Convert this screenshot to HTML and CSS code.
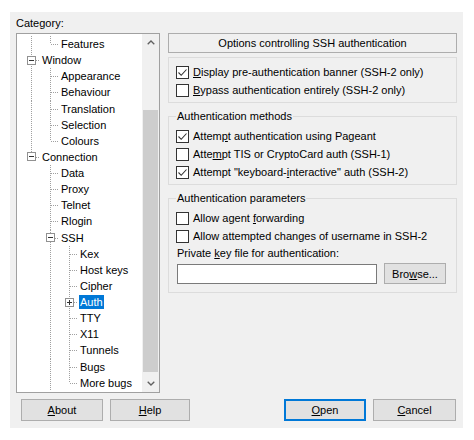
FILE: index.html
```html
<!DOCTYPE html>
<html lang="en">

<head>
    <meta charset="UTF-8">
    <meta name="viewport" content="width=device-width, initial-scale=1.0">
    <title>PuTTY Configuration</title>
    <link rel="stylesheet" href="styles.css">
</head>

<body>
    <div class="dialog">
        <div class="main">
            <div class="category">
                <div class="label">Category:</div>
                <div class="tree">
                    <ul class="nodes">
                        <li><span class="cell v"></span><span class="cell l"></span><span class="text">Features</span></li>
                        <li><span class="cell t"><svg class="exp" width="9" height="9" viewBox="0 0 9 9"><rect x="0.5" y="0.5" width="8" height="8" fill="#fff" stroke="#919191"/><path d="M2 4.5h5" stroke="#333"/></svg></span><span class="text">Window</span></li>
                        <li><span class="cell v"></span><span class="cell t"></span><span class="text">Appearance</span></li>
                        <li><span class="cell v"></span><span class="cell t"></span><span class="text">Behaviour</span></li>
                        <li><span class="cell v"></span><span class="cell t"></span><span class="text">Translation</span></li>
                        <li><span class="cell v"></span><span class="cell t"></span><span class="text">Selection</span></li>
                        <li><span class="cell v"></span><span class="cell l"></span><span class="text">Colours</span></li>
                        <li><span class="cell l"><svg class="exp" width="9" height="9" viewBox="0 0 9 9"><rect x="0.5" y="0.5" width="8" height="8" fill="#fff" stroke="#919191"/><path d="M2 4.5h5" stroke="#333"/></svg></span><span class="text">Connection</span></li>
                        <li><span class="cell"></span><span class="cell t"></span><span class="text">Data</span></li>
                        <li><span class="cell"></span><span class="cell t"></span><span class="text">Proxy</span></li>
                        <li><span class="cell"></span><span class="cell t"></span><span class="text">Telnet</span></li>
                        <li><span class="cell"></span><span class="cell t"></span><span class="text">Rlogin</span></li>
                        <li><span class="cell"></span><span class="cell t"><svg class="exp" width="9" height="9" viewBox="0 0 9 9"><rect x="0.5" y="0.5" width="8" height="8" fill="#fff" stroke="#919191"/><path d="M2 4.5h5" stroke="#333"/></svg></span><span class="text">SSH</span></li>
                        <li><span class="cell"></span><span class="cell v"></span><span class="cell t"></span><span class="text">Kex</span></li>
                        <li><span class="cell"></span><span class="cell v"></span><span class="cell t"></span><span class="text">Host keys</span></li>
                        <li><span class="cell"></span><span class="cell v"></span><span class="cell t"></span><span class="text">Cipher</span></li>
                        <li><span class="cell"></span><span class="cell v"></span><span class="cell t"><svg class="exp" width="9" height="9" viewBox="0 0 9 9"><rect x="0.5" y="0.5" width="8" height="8" fill="#fff" stroke="#919191"/><path d="M2 4.5h5M4.5 2v5" stroke="#333"/></svg></span><span class="text selected">Auth</span></li>
                        <li><span class="cell"></span><span class="cell v"></span><span class="cell t"></span><span class="text">TTY</span></li>
                        <li><span class="cell"></span><span class="cell v"></span><span class="cell t"></span><span class="text">X11</span></li>
                        <li><span class="cell"></span><span class="cell v"></span><span class="cell t"></span><span class="text">Tunnels</span></li>
                        <li><span class="cell"></span><span class="cell v"></span><span class="cell t"></span><span class="text">Bugs</span></li>
                        <li><span class="cell"></span><span class="cell v"></span><span class="cell l"></span><span class="text">More bugs</span></li>
                    </ul>
                    <div class="scrollbar">
                        <div class="arrow"><svg width="8" height="5" viewBox="0 0 8 5"><polyline points="0.7,4.3 4,1 7.3,4.3" fill="none" stroke="#606060" stroke-width="1.3"/></svg></div>
                        <div class="track"><div class="thumb"></div></div>
                        <div class="arrow"><svg width="8" height="5" viewBox="0 0 8 5"><polyline points="0.7,0.7 4,4 7.3,0.7" fill="none" stroke="#606060" stroke-width="1.3"/></svg></div>
                    </div>
                </div>
            </div>

            <div class="panel">
                <div class="header">Options controlling SSH authentication</div>

                <fieldset class="group">
                    <div class="check"><span class="box on"><svg width="11" height="11" viewBox="0 0 11 11"><polyline points="1.5,5.5 4.2,8.3 9.5,2.5" fill="none" stroke="#333" stroke-width="1.1"/></svg></span><span><u>D</u>isplay pre-authentication banner (SSH-2 only)</span></div>
                    <div class="check"><span class="box"></span><span><u>B</u>ypass authentication entirely (SSH-2 only)</span></div>
                </fieldset>

                <fieldset class="group">
                    <legend>Authentication methods</legend>
                    <div class="check"><span class="box on"><svg width="11" height="11" viewBox="0 0 11 11"><polyline points="1.5,5.5 4.2,8.3 9.5,2.5" fill="none" stroke="#333" stroke-width="1.1"/></svg></span><span>Attem<u>p</u>t authentication using Pageant</span></div>
                    <div class="check"><span class="box"></span><span>Atte<u>m</u>pt TIS or CryptoCard auth (SSH-1)</span></div>
                    <div class="check"><span class="box on"><svg width="11" height="11" viewBox="0 0 11 11"><polyline points="1.5,5.5 4.2,8.3 9.5,2.5" fill="none" stroke="#333" stroke-width="1.1"/></svg></span><span>Attempt "keyboard-<u>i</u>nteractive" auth (SSH-2)</span></div>
                </fieldset>

                <fieldset class="group">
                    <legend>Authentication parameters</legend>
                    <div class="check"><span class="box"></span><span>Allow agent <u>f</u>orwarding</span></div>
                    <div class="check"><span class="box"></span><span>Allow attempted changes of username in SSH-2</span></div>
                    <div class="field-label">Private <u>k</u>ey file for authentication:</div>
                    <div class="file-row">
                        <div class="input"></div>
                        <div class="btn browse">Bro<u>w</u>se...</div>
                    </div>
                </fieldset>
            </div>
        </div>

        <div class="buttons">
            <div class="btn"><u>A</u>bout</div>
            <div class="btn help"><u>H</u>elp</div>
            <div class="btn open"><u>O</u>pen</div>
            <div class="btn cancel"><u>C</u>ancel</div>
        </div>
    </div>
</body>

</html>
```

FILE: styles.css
```css
* {
    margin: 0;
    padding: 0;
    box-sizing: border-box;
}

ul {
    list-style: none;
}

body {
    background: #fff;
    font-family: "Liberation Sans", Arial, sans-serif;
    font-size: 11px;
    color: #000;
}

.dialog {
    width: 453px;
    height: 416px;
    margin: 12px 0 0 10px;
    padding: 3px 6px 0 6px;
    background-color: #f0f0f0;
}

.main {
    display: grid;
    grid-template-columns: 144px 289px;
    column-gap: 8px;
}

/* category tree */
.label {
    height: 16px;
    line-height: 16px;
    margin-bottom: 2px;
}

.tree {
    display: flex;
    height: 360px;
    border: 1px solid #a0a0a0;
    background-color: #fff;
}

.nodes {
    flex: 1;
    padding: 2px 0 0 5px;
}

.nodes li {
    display: flex;
    align-items: center;
    height: 16.14px;
    white-space: nowrap;
}

.cell {
    flex: none;
    display: flex;
    align-items: center;
    width: 19px;
    height: 100%;
}

.v {
    background: repeating-linear-gradient(#a0a0a0 0 1px, transparent 1px 2px) 9px 0 / 1px 100% no-repeat;
}

.t {
    background:
        repeating-linear-gradient(to right, #a0a0a0 0 1px, transparent 1px 2px) 10px 8px / 8px 1px no-repeat,
        repeating-linear-gradient(#a0a0a0 0 1px, transparent 1px 2px) 9px 0 / 1px 100% no-repeat;
}

.l {
    background:
        repeating-linear-gradient(to right, #a0a0a0 0 1px, transparent 1px 2px) 10px 8px / 8px 1px no-repeat,
        repeating-linear-gradient(#a0a0a0 0 1px, transparent 1px 2px) 9px 0 / 1px 8px no-repeat;
}

.exp {
    margin-left: 5px;
}

.text {
    padding: 0 1px;
    line-height: 14px;
}

.text.selected {
    background-color: #0078d7;
    color: #fff;
}

.scrollbar {
    display: flex;
    flex-direction: column;
    width: 17px;
    background-color: #f0f0f0;
}

.arrow {
    display: flex;
    align-items: center;
    justify-content: center;
    height: 17px;
}

.track {
    flex: 1;
    padding: 59px 1px 0;
}

.thumb {
    height: 262px;
    background-color: #cdcdcd;
}

/* options panel */
.panel {
    margin-top: 18px;
}

.header {
    height: 20px;
    line-height: 18px;
    border: 1px solid #adadad;
    text-align: center;
}

.group {
    margin-top: 4px;
    padding: 5px 7px 3px;
    border: 1px solid #dcdcdc;
}

.group + .group {
    margin-top: 6px;
    padding-top: 4px;
}

.group legend {
    padding: 0 1px;
    line-height: 14px;
}

.check {
    display: flex;
    align-items: center;
    gap: 4px;
    height: 18px;
    white-space: nowrap;
}

.box {
    display: flex;
    align-items: center;
    justify-content: center;
    width: 13px;
    height: 13px;
    border: 1px solid #333;
    background-color: #fff;
}

.field-label {
    height: 16px;
    line-height: 16px;
    padding-left: 1px;
}

.file-row {
    display: flex;
    align-items: center;
    margin: 2px 0 5px 1px;
}

.input {
    width: 200px;
    height: 20px;
    border: 1px solid #7a7a7a;
    background-color: #fff;
}

.btn {
    display: flex;
    align-items: center;
    justify-content: center;
    height: 22px;
    border: 1px solid #adadad;
    background-color: #e1e1e1;
}

.browse {
    width: 62px;
    height: 21px;
    margin-left: 7px;
}

/* bottom buttons */
.buttons {
    display: flex;
    gap: 7px;
    margin-top: 6px;
    padding: 0 1px 0 5px;
}

.buttons .btn {
    width: 82px;
}

.buttons .help {
    width: 80px;
}

.buttons .open {
    margin-left: auto;
    border-color: #0078d7;
    box-shadow: inset 0 0 0 1px #0078d7;
}

.buttons .cancel {
    width: 83px;
}
```
